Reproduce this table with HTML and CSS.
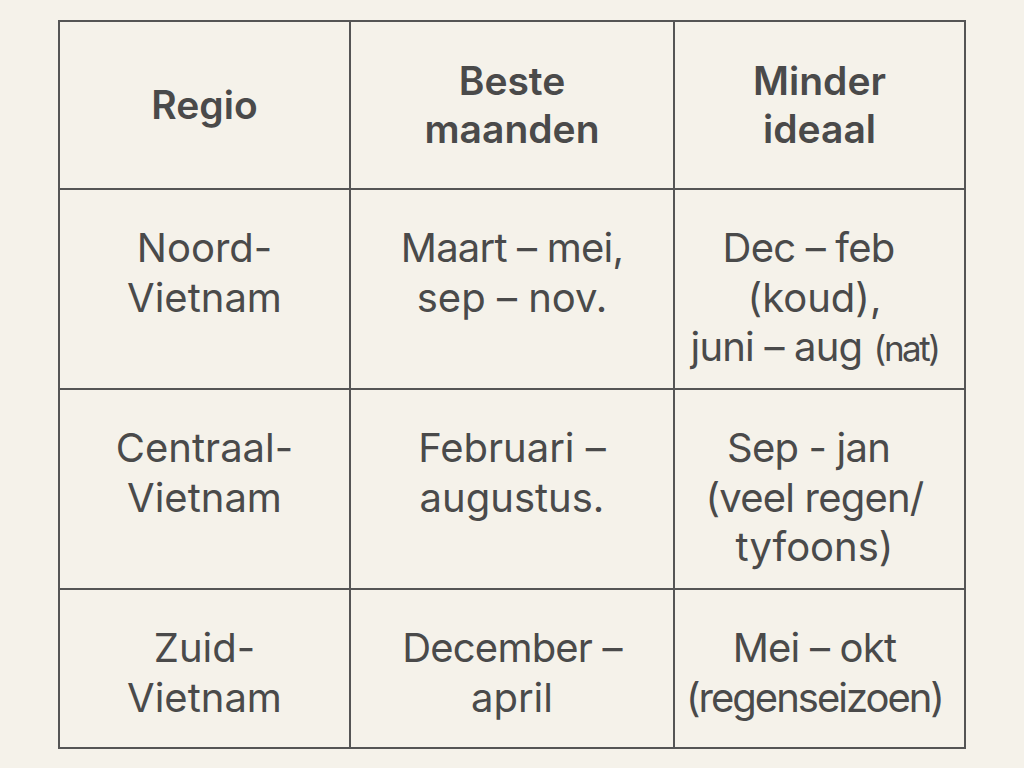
FILE: index.html
```html
<!DOCTYPE html>
<html lang="nl">
<head>
<meta charset="utf-8">
<link rel="stylesheet" href="styles.css">
</head>
<body>
<table class="grid">
  <colgroup>
    <col class="c1"><col class="c2"><col class="c3">
  </colgroup>
  <thead>
    <tr class="head">
      <th>Regio</th>
      <th>Beste<br>maanden</th>
      <th>Minder<br>ideaal</th>
    </tr>
  </thead>
  <tbody>
    <tr class="r1">
      <td>Noord-<br>Vietnam</td>
      <td><span class="tight">Maart – mei,</span><br>sep – nov.</td>
      <td class="last"><span class="tight shift">Dec – feb</span><br>(koud),<br><span class="tight">juni – aug</span> <span class="cond">(nat)</span></td>
    </tr>
    <tr class="r2">
      <td>Centraal-<br>Vietnam</td>
      <td>Februari –<br>augustus.</td>
      <td class="last"><span class="tight shift">Sep - jan</span><br><span class="tight">(veel regen/</span><br>tyfoons)</td>
    </tr>
    <tr class="r3">
      <td>Zuid-<br>Vietnam</td>
      <td><span class="tight">December –</span><br>april</td>
      <td class="last"><span class="tight">Mei – okt</span><br><span class="squeeze">(regenseizoen)</span></td>
    </tr>
  </tbody>
</table>
</body>
</html>
```

FILE: styles.css
```css
html, body {
  margin: 0;
  padding: 0;
  background: #f5f2ea;
}
body {
  padding: 20px 0 0 58px;
  font-family: "Inter", "Liberation Sans", sans-serif;
  color: #4a4a4a;
}
.grid {
  border-collapse: collapse;
  table-layout: fixed;
  width: 906px;
}
.c1 { width: 291px; }
.c2 { width: 324px; }
.c3 { width: 291px; }
.grid th, .grid td {
  border: 2px solid #555;
  text-align: center;
  padding: 0 4px;
}
.grid th {
  font-size: 39px;
  font-weight: 600;
  line-height: 48px;
  vertical-align: middle;
  height: 168px;
  box-sizing: border-box;
}
.grid td {
  font-size: 40px;
  font-weight: 400;
  line-height: 49.5px;
  vertical-align: top;
  padding-top: 33px;
  box-sizing: border-box;
  white-space: nowrap;
}
.grid td.last {
  padding-right: 14px;
}
.r1 td, .r2 td { height: 200px; }
.r3 td { height: 159px; }
.tight {
  letter-spacing: -0.8px;
}
.shift {
  margin-right: 12px;
}
.cond {
  letter-spacing: -2.5px;
  font-size: 35px;
}
.squeeze {
  letter-spacing: -2px;
}
```
